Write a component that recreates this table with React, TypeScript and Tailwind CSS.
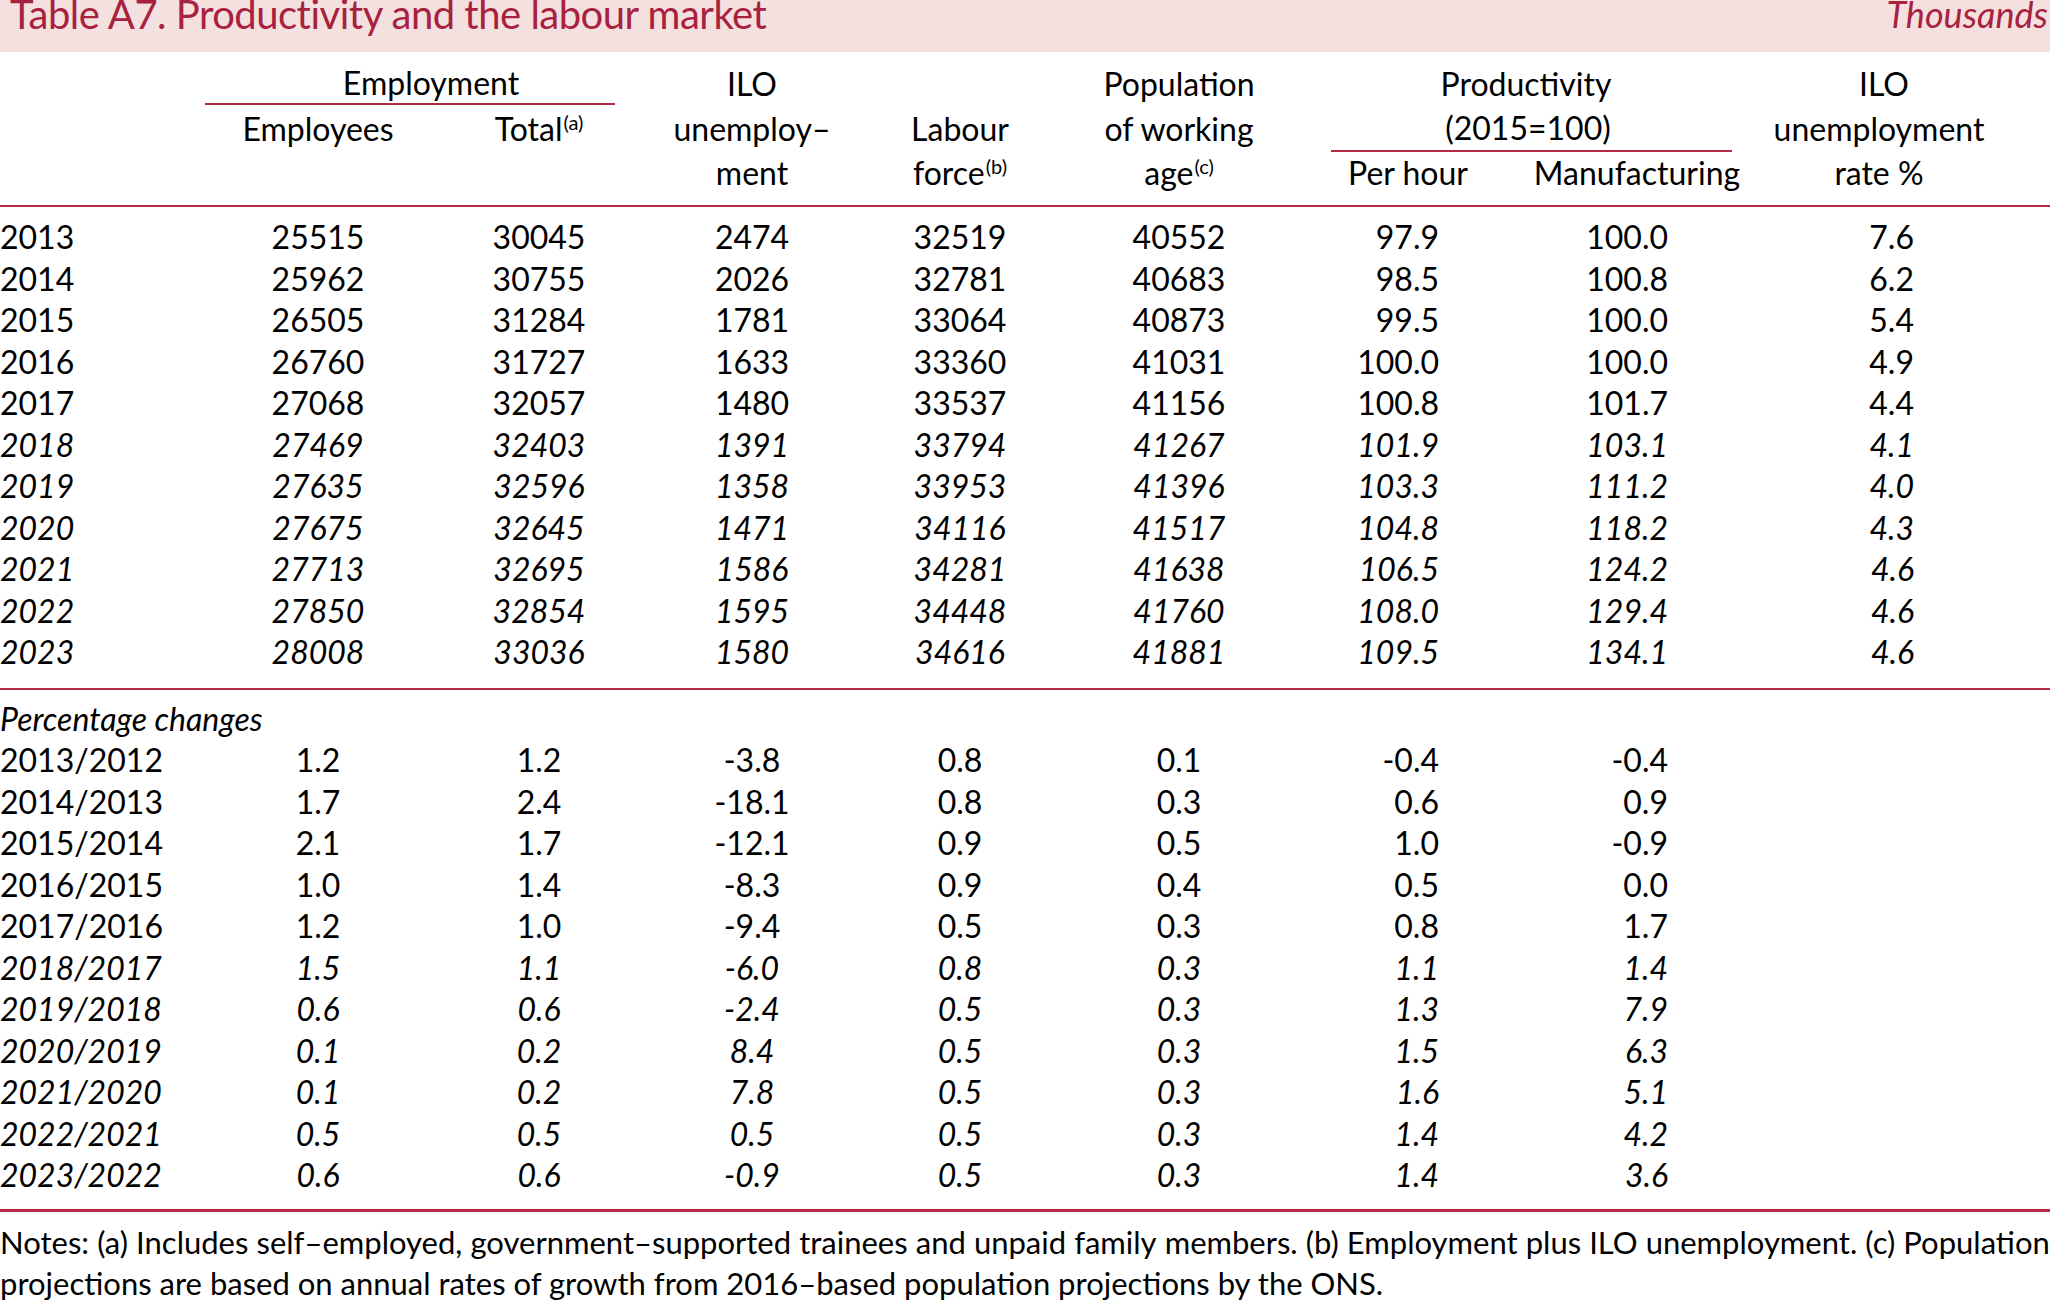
import React from "react"

const cols = "grid grid-cols-[210px_216px_226px_200px_216px_222px_236px_222px_262px]"

type Row = { label: string; v: string[]; italic?: boolean }

const levels: Row[] = [
  { label: "2013", v: ["25515", "30045", "2474", "32519", "40552", "97.9", "100.0", "7.6"] },
  { label: "2014", v: ["25962", "30755", "2026", "32781", "40683", "98.5", "100.8", "6.2"] },
  { label: "2015", v: ["26505", "31284", "1781", "33064", "40873", "99.5", "100.0", "5.4"] },
  { label: "2016", v: ["26760", "31727", "1633", "33360", "41031", "100.0", "100.0", "4.9"] },
  { label: "2017", v: ["27068", "32057", "1480", "33537", "41156", "100.8", "101.7", "4.4"] },
  { label: "2018", v: ["27469", "32403", "1391", "33794", "41267", "101.9", "103.1", "4.1"], italic: true },
  { label: "2019", v: ["27635", "32596", "1358", "33953", "41396", "103.3", "111.2", "4.0"], italic: true },
  { label: "2020", v: ["27675", "32645", "1471", "34116", "41517", "104.8", "118.2", "4.3"], italic: true },
  { label: "2021", v: ["27713", "32695", "1586", "34281", "41638", "106.5", "124.2", "4.6"], italic: true },
  { label: "2022", v: ["27850", "32854", "1595", "34448", "41760", "108.0", "129.4", "4.6"], italic: true },
  { label: "2023", v: ["28008", "33036", "1580", "34616", "41881", "109.5", "134.1", "4.6"], italic: true },
]

const changes: Row[] = [
  { label: "2013/2012", v: ["1.2", "1.2", "-3.8", "0.8", "0.1", "-0.4", "-0.4", ""] },
  { label: "2014/2013", v: ["1.7", "2.4", "-18.1", "0.8", "0.3", "0.6", "0.9", ""] },
  { label: "2015/2014", v: ["2.1", "1.7", "-12.1", "0.9", "0.5", "1.0", "-0.9", ""] },
  { label: "2016/2015", v: ["1.0", "1.4", "-8.3", "0.9", "0.4", "0.5", "0.0", ""] },
  { label: "2017/2016", v: ["1.2", "1.0", "-9.4", "0.5", "0.3", "0.8", "1.7", ""] },
  { label: "2018/2017", v: ["1.5", "1.1", "-6.0", "0.8", "0.3", "1.1", "1.4", ""], italic: true },
  { label: "2019/2018", v: ["0.6", "0.6", "-2.4", "0.5", "0.3", "1.3", "7.9", ""], italic: true },
  { label: "2020/2019", v: ["0.1", "0.2", "8.4", "0.5", "0.3", "1.5", "6.3", ""], italic: true },
  { label: "2021/2020", v: ["0.1", "0.2", "7.8", "0.5", "0.3", "1.6", "5.1", ""], italic: true },
  { label: "2022/2021", v: ["0.5", "0.5", "0.5", "0.5", "0.3", "1.4", "4.2", ""], italic: true },
  { label: "2023/2022", v: ["0.6", "0.6", "-0.9", "0.5", "0.3", "1.4", "3.6", ""], italic: true },
]

// alignment per value column (Employees .. ILO rate)
const cellAlign = [
  "text-center",
  "text-center",
  "text-center",
  "text-center",
  "text-center",
  "text-right pr-[87px]",
  "text-right pr-[80px]",
  "text-right pr-[96px]",
]

const notesLine1 =
  "Notes: (a) Includes self–employed, government–supported trainees and unpaid family members. (b) Employment plus ILO unemployment. (c) Population"

function DataRow({ row }: { row: Row }) {
  return (
    <div className={`${cols} h-[41.5px] leading-[41.5px] ${row.italic ? "italic" : ""}`}>
      <div className="text-left whitespace-nowrap">{row.label}</div>
      {row.v.map((val, i) => (
        <div key={i} className={cellAlign[i]}>
          {val}
        </div>
      ))}
    </div>
  )
}

function Sup({ children }: { children: React.ReactNode }) {
  return <span className="text-[20px] relative -top-[7px] leading-none ml-[1px]">{children}</span>
}

function Header() {
  return (
    <div className={`${cols} grid-rows-[42px_47px_42px] pt-[11px] pb-[11px] border-b-2 border-[#b52a42] leading-none`}>
      {/* row 1 */}
      <div className="col-start-2 col-span-2 row-start-1 flex flex-col">
        <div className="flex-1 flex items-center justify-center">Employment</div>
        <div className="h-[2px] bg-[#b52a42] ml-[-5px] mr-[37px]" />
      </div>
      <div className="col-start-4 row-start-1 flex items-center justify-center">ILO</div>
      <div className="col-start-6 row-start-1 flex items-center justify-center">Population</div>
      <div className="col-start-7 col-span-2 row-start-1 flex items-center justify-center pl-[14px]">Productivity</div>
      <div className="col-start-9 row-start-1 flex items-center justify-center pl-[10px]">ILO</div>

      {/* row 2 */}
      <div className="col-start-2 row-start-2 flex items-center justify-center">Employees</div>
      <div className="col-start-3 row-start-2 flex items-center justify-center">
        Total<Sup>(a)</Sup>
      </div>
      <div className="col-start-4 row-start-2 flex items-center justify-center">unemploy–</div>
      <div className="col-start-5 row-start-2 flex items-center justify-center">Labour</div>
      <div className="col-start-6 row-start-2 flex items-center justify-center">of working</div>
      <div className="col-start-7 col-span-2 row-start-2 flex flex-col">
        <div className="flex-1 flex items-center justify-center pl-[18px]">(2015=100)</div>
        <div className="h-[2px] bg-[#b52a42] ml-[41px] mr-[16px]" />
      </div>
      <div className="col-start-9 row-start-2 flex items-center justify-center">unemployment</div>

      {/* row 3 */}
      <div className="col-start-4 row-start-3 flex items-center justify-center">ment</div>
      <div className="col-start-5 row-start-3 flex items-center justify-center">
        force<Sup>(b)</Sup>
      </div>
      <div className="col-start-6 row-start-3 flex items-center justify-center">
        age<Sup>(c)</Sup>
      </div>
      <div className="col-start-7 row-start-3 flex items-center justify-center">Per hour</div>
      <div className="col-start-8 row-start-3 flex items-center justify-center">Manufacturing</div>
      <div className="col-start-9 row-start-3 flex items-center justify-center">rate %</div>
    </div>
  )
}

export default function App() {
  return (
    <div className="w-[2050px] h-[1304px] overflow-hidden bg-white text-black font-['Lato','Open_Sans',sans-serif] text-[32px]">
      {/* title bar */}
      <div className="h-[52px] bg-[#f4e0de] flex justify-between items-start pl-[10px] pr-[2px] text-[#a8213f]">
        <div className="text-[40px] leading-[29px] whitespace-nowrap tracking-[-0.5px]">
          Table A7. Productivity and the labour market
        </div>
        <div className="text-[36px] leading-[29px] italic whitespace-nowrap">Thousands</div>
      </div>

      <Header />

      <div className="pt-[9px] pb-[15px] border-b-2 border-[#b52a42]">
        {levels.map((r) => (
          <DataRow key={r.label} row={r} />
        ))}
      </div>

      <div className="pt-[8px] pb-[13px] border-b-[3px] border-[#b52a42]">
        <div className="h-[41.5px] leading-[41.5px] italic">Percentage changes</div>
        {changes.map((r) => (
          <DataRow key={r.label} row={r} />
        ))}
      </div>

      <div className="pt-[10px] text-[31px] leading-[41px]">
        <div className="flex justify-between whitespace-nowrap">
          {notesLine1.split(" ").map((w, i) => (
            <span key={i}>{w}</span>
          ))}
        </div>
        <div className="whitespace-nowrap">
          projections are based on annual rates of growth from 2016–based population projections by the ONS.
        </div>
      </div>
    </div>
  )
}
